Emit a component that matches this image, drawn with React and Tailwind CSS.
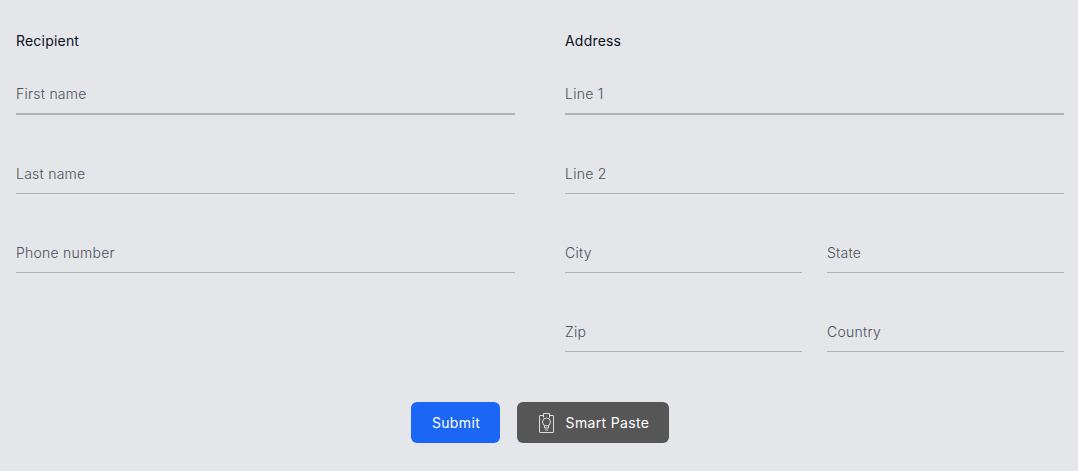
const font = { fontFamily: 'Inter, sans-serif' };

function Field({ label, thick }) {
  return (
    <div className="h-[79px] flex flex-col justify-end">
      <div className={`pb-[9px] text-[14px] leading-[20px] font-light tracking-[0.25px] text-[#4a505c] border-b-[#b0b1b5] ${thick ? 'border-b-2' : 'border-b'}`}>
        {label}
      </div>
    </div>
  );
}

function PasteIcon() {
  return (
    <svg width="15" height="20" viewBox="0 0 15 20" fill="none" stroke="#dcdcdc" strokeWidth="1">
      <path d="M4 2.5H1a.5.5 0 0 0-.5.5v16a.5.5 0 0 0 .5.5h13a.5.5 0 0 0 .5-.5V3a.5.5 0 0 0-.5-.5h-3" />
      <path d="M4.5 4.5V.5h6v4" />
      <circle cx="7.5" cy="9" r="4" />
      <path d="M5.5 12.5v2.5h4v-2.5M6 17h3" />
    </svg>
  );
}

export default function App() {
  return (
    <div className="w-[1078px] h-[471px] bg-[#e5e6ea] pl-4 pr-[14px] pt-[31px]" style={font}>
      <div className="grid grid-cols-2 gap-x-[50px]">
        <div>
          <h3 className="text-[14px] leading-[20px] font-normal tracking-[0.2px] text-[#0a1020]">Recipient</h3>
          <div className="-mt-[15px]">
            <Field label="First name" thick />
            <Field label="Last name" />
            <Field label="Phone number" />
          </div>
        </div>
        <div>
          <h3 className="text-[14px] leading-[20px] font-normal tracking-[0.2px] text-[#0a1020]">Address</h3>
          <div className="-mt-[15px]">
            <Field label="Line 1" thick />
            <Field label="Line 2" />
            <div className="grid grid-cols-2 gap-x-[25px]">
              <Field label="City" />
              <Field label="State" />
              <Field label="Zip" />
              <Field label="Country" />
            </div>
          </div>
        </div>
      </div>
      <div className="mt-[50px] flex justify-center gap-[17px] pr-[1px]">
        <button className="w-[89px] h-[41px] pl-[2px] rounded-[6px] bg-[#1b66f5] text-white text-[14px] font-normal tracking-[0.35px]">Submit</button>
        <button className="w-[152px] h-[41px] pl-[3px] rounded-[6px] bg-[#565656] text-white text-[14px] font-normal tracking-[0.35px] flex items-center justify-center gap-[12px]">
          <PasteIcon />
          Smart Paste
        </button>
      </div>
    </div>
  );
}
